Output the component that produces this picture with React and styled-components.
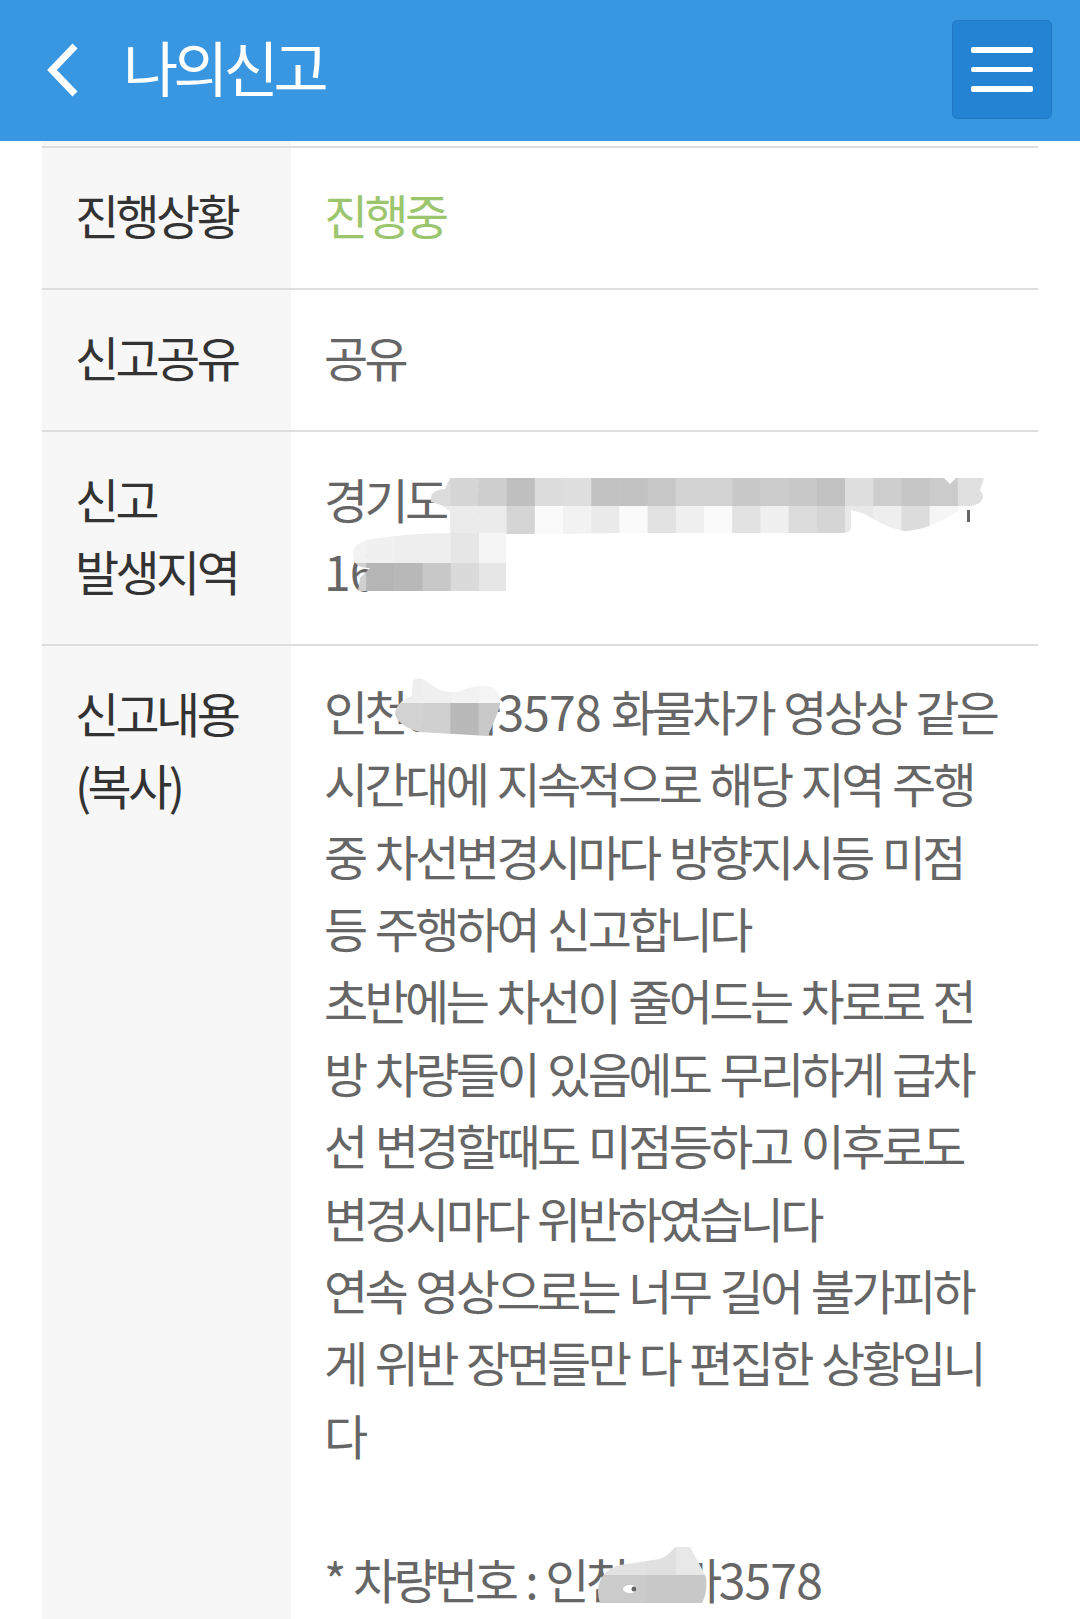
import React from "react";
import styled, { createGlobalStyle } from "styled-components";

const GlobalStyle = createGlobalStyle`
  html, body {
    margin: 0;
    padding: 0;
    height: 100%;
    overflow: hidden;
    background: #fff;
  }
  body {
    font-family: "Noto Sans CJK KR", "Noto Sans", sans-serif;
  }
`;

const Page = styled.div`
  height: 1619px;
  overflow: hidden;
  display: flex;
  flex-direction: column;
`;

const Header = styled.header`
  flex: none;
  height: 141px;
  box-sizing: border-box;
  padding: 0 28px 2px 46px;
  display: flex;
  align-items: center;
  background: #3997e2;
`;

const BackIcon = styled.svg`
  width: 34px;
  height: 54px;
  flex: none;
`;

const Title = styled.h1`
  flex: 1;
  margin: -8px 0 0 43px;
  font-size: 60px;
  font-weight: 400;
  line-height: 1;
  letter-spacing: -5px;
  color: #fff;
`;

const MenuButton = styled.button`
  width: 100px;
  height: 99px;
  padding: 0;
  display: flex;
  flex-direction: column;
  align-items: center;
  justify-content: center;
  gap: 14px;
  background: #2583d4;
  border: 1px solid #2179c6;
  border-radius: 5px;
`;

const MenuBar = styled.span`
  width: 62px;
  height: 5.5px;
  border-radius: 2px;
  background: #fff;
`;

const Table = styled.section`
  flex: 1;
  margin: 0 42px;
  padding-top: 5px;
  background: linear-gradient(to right, #f7f7f7 249px, #fff 249px);
`;

const Row = styled.div`
  display: grid;
  grid-template-columns: 249px 1fr;
  border-top: 2px solid #dedede;
`;

const Label = styled.div`
  padding: 30px 0 38px 33px;
  font-size: 48px;
  line-height: 72px;
  letter-spacing: -3.6px;
  color: #333;
`;

const Value = styled.div`
  position: relative;
  padding: 30px 0 38px 33px;
  font-size: 48px;
  line-height: 72px;
  letter-spacing: -3.6px;
  word-spacing: 3px;
  white-space: pre;
  color: ${(p) => p.$color || "#666"};
`;

const ContentBody = styled.div`
  margin-top: -2px;
`;

const ContentLine = styled.div`
  line-height: 72.36px;
`;

const Digits = styled.span`
  letter-spacing: -0.8px;
`;

const Smudge = styled.svg`
  position: absolute;
  left: ${(p) => p.$left}px;
  top: ${(p) => p.$top}px;
`;

// page coordinates, so the tiles can be read straight off the screenshot
function Redaction({ x, y, w, h, cellX, cellY, shape, tiles, id, children }) {
  return (
    <Smudge $left={x - cellX} $top={y - cellY} width={w} height={h} viewBox={`${x} ${y} ${w} ${h}`}>
      <clipPath id={id}>
        <path d={shape} />
      </clipPath>
      <g clipPath={`url(#${id})`}>
        {tiles.map(([tx, ty, tw, th, fill], i) => (
          <rect key={i} x={tx} y={ty} width={tw + 0.5} height={th} fill={fill} />
        ))}
      </g>
      {children}
    </Smudge>
  );
}

function strip(x0, y, size, h, colors) {
  return colors.map((c, i) => [x0 + i * size, y, size, h, c]);
}

const addressTop = [
  ...strip(422, 478, 28.2, 28, ["#dcdcdc", "#d5d5d5", "#cfcfcf", "#bfbfbf", "#dcdcdc", "#dedede", "#c2c2c2", "#c2c2c2", "#c7c7c7", "#d2d2d2", "#d2d2d2", "#c8c8c8", "#cbcbcb", "#c8c8c8", "#c2c2c2", "#dedede", "#cecece", "#c6c6c6", "#cbcbcb", "#e0e0e0"]),
  ...strip(422, 506, 28.2, 28, ["#ebebeb", "#ebebeb", "#ebebeb", "#d5d5d5", "#fafafa", "#f2f2f2", "#eaeaea", "#fafafa", "#e2e2e2", "#f0f0f0", "#fafafa", "#e2e2e2", "#f0f0f0", "#dcdcdc", "#d5d5d5", "#e8e8e8", "#eeeeee", "#dcdcdc", "#f5f5f5"]),
];

const addressBottom = [
  ...strip(338, 533, 28.2, 30, ["#f2f2f2", "#f0f0f0", "#eeeeee", "#eeeeee", "#e6e6e6", "#f5f5f5"]),
  ...strip(338, 563, 28.2, 28, ["#d0d0d0", "#b5b5b5", "#b8b8b8", "#c8c8c8", "#dadada", "#e6e6e6"]),
];

const plateOne = [
  ...strip(394, 676, 28.2, 27, ["#eeeeee", "#f0f0f0", "#f2f2f2", "#f5f5f5"]),
  ...strip(394, 703, 28.2, 34, ["#d2d2d2", "#d0d0d0", "#b9b9b9", "#c9c9c9"]),
];

const plateTwo = [
  [596, 1545, 50, 30, "#e2e2e2"],
  [646, 1545, 30, 30, "#e0e0e0"],
  [676, 1545, 32, 30, "#e8e8e8"],
  [596, 1575, 50, 30, "#cbcbcb"],
  [646, 1575, 62, 30, "#c8c8c8"],
];

const contentLines = [
  <>인천<Digits>00</Digits>바<Digits>3578</Digits> 화물차가 영상상 같은</>,
  "시간대에 지속적으로 해당 지역 주행",
  "중 차선변경시마다 방향지시등 미점",
  "등 주행하여 신고합니다",
  "초반에는 차선이 줄어드는 차로로 전",
  "방 차량들이 있음에도 무리하게 급차",
  "선 변경할때도 미점등하고 이후로도",
  "변경시마다 위반하였습니다",
  "연속 영상으로는 너무 길어 불가피하",
  "게 위반 장면들만 다 편집한 상황입니",
  "다",
  " ",
  <>* 차량번호 : 인천<Digits>00</Digits>바<Digits>3578</Digits></>,
];

export default function App() {
  return (
    <>
      <GlobalStyle />
      <Page>
        <Header>
          <BackIcon viewBox="0 0 34 54">
            <polyline points="29,3 6,27 29,51" fill="none" stroke="#fff" strokeWidth="7" strokeLinejoin="miter" />
          </BackIcon>
          <Title>나의신고</Title>
          <MenuButton aria-label="메뉴">
            <MenuBar />
            <MenuBar />
            <MenuBar />
          </MenuButton>
        </Header>
        <Table>
          <Row>
            <Label>진행상황</Label>
            <Value $color="#9cc66e">진행중</Value>
          </Row>
          <Row>
            <Label>신고공유</Label>
            <Value>공유</Value>
          </Row>
          <Row>
            <Label>신고<br />발생지역</Label>
            <Value>
              경기도 화{"\n"}<Digits>16</Digits>
              <Redaction
                id="addressTop"
                x={425} y={470} w={570} h={72}
                cellX={291} cellY={432}
                tiles={addressTop}
                shape="M431 498 Q431 490 445 489 L450 478 L944 478 L950 484 L956 478 L984 478 L980 490 Q988 500 975 505 L960 510 Q930 530 905 531 Q885 528 865 514 L851 510 L851 528 Q851 533 840 533 L610 533 L450 536 L450 512 Q445 505 431 502 Z"
              >
                <rect x="967" y="510" width="3" height="12" fill="#666" />
              </Redaction>
              <Redaction
                id="addressBottom"
                x={350} y={530} w={160} h={64}
                cellX={291} cellY={432}
                tiles={addressBottom}
                shape="M353 555 Q353 542 372 539 Q410 533 450 533 L506 533 L506 591 L358 591 L360 578 L370 568 Q353 568 353 555 Z"
              />
            </Value>
          </Row>
          <Row>
            <Label>신고내용<br />(복사)</Label>
            <Value>
              <ContentBody>
                {contentLines.map((line, i) => (
                  <ContentLine key={i}>{line}</ContentLine>
                ))}
              </ContentBody>
              <Redaction
                id="plateOne"
                x={390} y={674} w={120} h={66}
                cellX={291} cellY={646}
                tiles={plateOne}
                shape="M413 680 Q420 676 428 682 Q442 694 458 692 Q480 682 494 688 Q504 696 498 712 L488 736 L420 732 Q398 726 395 714 Q396 702 412 696 Z"
              />
              <Redaction
                id="plateTwo"
                x={594} y={1544} w={116} h={62}
                cellX={291} cellY={646}
                tiles={plateTwo}
                shape="M598 1590 Q600 1570 620 1565 L660 1559 Q668 1556 675 1547 L690 1547 Q700 1565 706 1577 Q708 1592 702 1603 L600 1603 Q598 1598 598 1590 Z"
              >
                <ellipse cx="630" cy="1589" rx="7" ry="4" fill="#fff" />
                <circle cx="634" cy="1589" r="2.5" fill="#666" />
              </Redaction>
            </Value>
          </Row>
        </Table>
      </Page>
    </>
  );
}
